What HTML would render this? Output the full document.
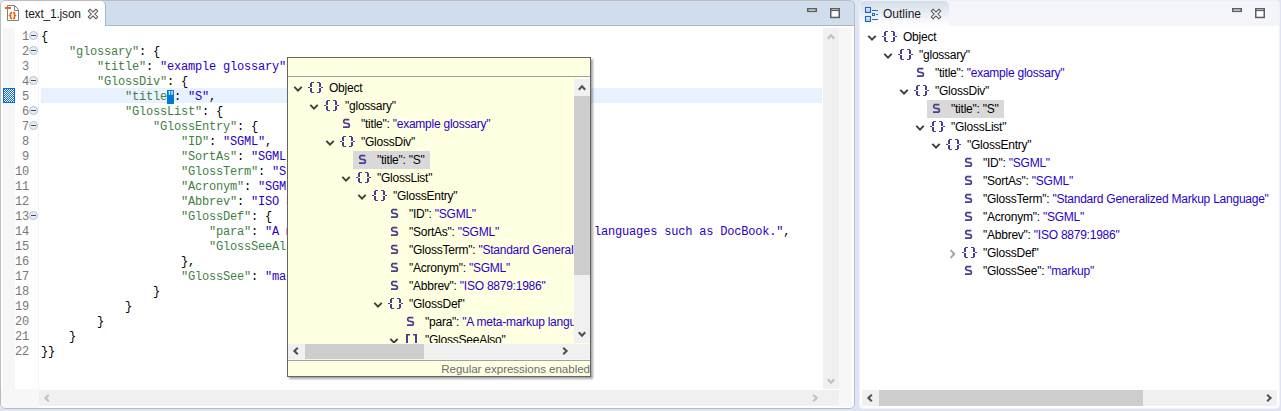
<!DOCTYPE html>
<html><head><meta charset="utf-8">
<style>
*{box-sizing:border-box}
html,body{margin:0;padding:0}
body{width:1281px;height:411px;overflow:hidden;position:relative;background:#DEE4F5;font-family:"Liberation Sans",sans-serif;font-size:12px;color:#000}
.a{position:absolute}
svg{position:absolute;overflow:visible}
#ed{position:absolute;left:0;top:0;width:855px;height:409px;background:#fff;border-radius:5px;overflow:hidden}
#edb{position:absolute;left:0;top:0;width:855px;height:409px;border:1px solid #BDBDBD;border-radius:5px}
#tabbar{position:absolute;left:1px;top:1px;width:853px;height:25px;background:#D0DDED;border-bottom:1px solid #A7B7CD}
#tab{position:absolute;left:1px;top:1px;width:105px;height:25px;background:#fff;border-right:1px solid #A3B3CB;border-top-right-radius:5px}
.tt{position:absolute;font-size:12px;color:#1a1a1a;white-space:nowrap;line-height:14px}
.num{position:absolute;left:0;width:29px;text-align:right;font-family:"Liberation Mono",monospace;font-size:12px;line-height:15px;height:15px;color:#787878;letter-spacing:-0.2px;padding-top:2px}
.fold{position:absolute;left:29px;width:9px;height:9px;border-radius:50%;background:#E8EEF6;border:1px solid #B4C0D0}
.fold:after{content:"";position:absolute;left:1.2px;top:3px;width:4.6px;height:1.3px;background:#3E4A5C}
.ln{position:absolute;left:41px;white-space:pre;font-family:"Liberation Mono",monospace;font-size:12px;line-height:15px;height:15px;letter-spacing:-0.2px;color:#000;padding-top:2px}
.k{color:#437F44}
.v{color:#2A00C4}
.sel{background:#0078D7;color:#fff}
.ic{position:absolute}
.tl{position:absolute;height:18px;line-height:18px;white-space:pre;font-size:12px;letter-spacing:-0.24px;color:#000}
.tv{color:#2A00C8}
.tsel{position:absolute;height:18px;background:#D9D9D9}
#ptree .tsel{background:#D8D8C6}
#ol{position:absolute;left:859px;top:0;width:421px;height:409px;background:#fff;border-radius:5px;overflow:hidden}
#olb{position:absolute;left:859px;top:0;width:421px;height:409px;border:1px solid #EEF1F8;border-radius:5px}
#pop{position:absolute;left:287px;top:57px;width:304px;height:320px;background:#FFFFE1;box-shadow:2px 2px 2px rgba(0,0,0,0.35);overflow:hidden}
#popb{position:absolute;left:287px;top:57px;width:304px;height:320px;border:1px solid #646464}
#ptree{position:absolute;left:1px;top:20px;width:286px;height:266px;overflow:hidden}
#pstat{position:absolute;right:1px;top:306px;font-size:11.6px;color:#6D6D6D;line-height:14px;letter-spacing:-0.05px;white-space:nowrap}
</style></head><body>
<div id="ed">
  <div id="tabbar"></div>
  <div id="tab"></div>
  <svg style="left:4px;top:4px" width="16" height="18" viewBox="0 0 16 18">
    <path d="M3.5 1.5 H10.5 L14.5 5.5 V16.5 H3.5 Z" fill="#fff" stroke="#808080" stroke-width="1"/>
    <path d="M10.5 1.5 V6.5 H14.5" fill="none" stroke="#808080" stroke-width="1"/>
    <rect x="1" y="3" width="6" height="2" fill="#E8650E"/>
    <path fill="none" stroke="#E8650E" stroke-width="1.6" d="M8.2 8.6 H7.3 Q6.6 8.6 6.6 9.3 V10.7 L5.7 11.4 L6.6 12.1 V13.8 Q6.6 14.5 7.3 14.5 H8.2 M9 8.6 H9.8 Q10.5 8.6 10.5 9.3 V10.7 L11.4 11.4 L10.5 12.1 V13.8 Q10.5 14.5 9.8 14.5 H9"/>
  </svg>
  <div class="tt" style="left:25px;top:7px;letter-spacing:-0.2px">text_1.json</div>
  <svg style="left:88px;top:9px" width="10" height="10" viewBox="0 0 10 10"><path d="M2.1 2.1 L7.9 7.9 M7.9 2.1 L2.1 7.9" stroke="#505050" stroke-width="3.6" stroke-linecap="square"/><path d="M2.1 2.1 L7.9 7.9 M7.9 2.1 L2.1 7.9" stroke="#fff" stroke-width="1.7" stroke-linecap="square"/></svg>
  <svg style="left:807px;top:8px" width="10" height="5" viewBox="0 0 10 5"><rect x="0.75" y="0.75" width="8.5" height="2.6" fill="#fff" stroke="#5E5E5E" stroke-width="1.5"/></svg>
  <svg style="left:830px;top:8px" width="10" height="11" viewBox="0 0 10 11"><rect x="0.75" y="0.75" width="8.5" height="8.7" fill="#fff" stroke="#5E5E5E" stroke-width="1.5"/><rect x="1" y="2" width="8" height="1.1" fill="#5E5E5E"/></svg>
  <div class="a" style="left:3px;top:28px;width:12px;height:361px;background:#F6F6F6"></div>
  <div class="a" style="left:1px;top:389px;width:38px;height:19px;background:#F7F7F7"></div>
  <div class="a" style="left:38px;top:28px;width:1px;height:361px;background:#F4F4F4"></div>
  <div class="a" style="left:839px;top:28px;width:13px;height:379px;background:#F7F7F7"></div>
  <div class="a" style="left:41px;top:88px;width:781px;height:15px;background:#E8F2FE"></div>
  <svg style="left:3px;top:88px" width="12" height="15" viewBox="0 0 12 15"><defs><pattern id="ck" width="2" height="2" patternUnits="userSpaceOnUse"><rect width="2" height="2" fill="#fff"/><rect width="1" height="1" fill="#0A6BD8"/><rect x="1" y="1" width="1" height="1" fill="#0A6BD8"/></pattern></defs><rect width="12" height="15" fill="url(#ck)"/><rect x="0.5" y="0.5" width="11" height="14" fill="none" stroke="#0A6BD8" stroke-width="1"/></svg>
  <div class="num" style="top:28px">1</div>
<div class="fold" style="top:31px"></div>
<div class="num" style="top:43px">2</div>
<div class="fold" style="top:46px"></div>
<div class="num" style="top:58px">3</div>
<div class="num" style="top:73px">4</div>
<div class="fold" style="top:76px"></div>
<div class="num" style="top:88px">5</div>
<div class="num" style="top:103px">6</div>
<div class="fold" style="top:106px"></div>
<div class="num" style="top:118px">7</div>
<div class="fold" style="top:121px"></div>
<div class="num" style="top:133px">8</div>
<div class="num" style="top:148px">9</div>
<div class="num" style="top:163px">10</div>
<div class="num" style="top:178px">11</div>
<div class="num" style="top:193px">12</div>
<div class="num" style="top:208px">13</div>
<div class="fold" style="top:211px"></div>
<div class="num" style="top:223px">14</div>
<div class="num" style="top:238px">15</div>
<div class="num" style="top:253px">16</div>
<div class="num" style="top:268px">17</div>
<div class="num" style="top:283px">18</div>
<div class="num" style="top:298px">19</div>
<div class="num" style="top:313px">20</div>
<div class="num" style="top:328px">21</div>
<div class="num" style="top:343px">22</div>
  <div class="ln" style="top:28px">{</div>
<div class="ln" style="top:43px">    <span class="k">&quot;glossary&quot;</span>: {</div>
<div class="ln" style="top:58px">        <span class="k">&quot;title&quot;</span>: <span class="v">&quot;example glossary&quot;</span>,</div>
<div class="ln" style="top:73px">        <span class="k">&quot;GlossDiv&quot;</span>: {</div>
<div class="ln" style="top:88px">            <span class="k">&quot;title</span><span class="sel">&quot;</span>: <span class="v">&quot;S&quot;</span>,</div>
<div class="ln" style="top:103px">            <span class="k">&quot;GlossList&quot;</span>: {</div>
<div class="ln" style="top:118px">                <span class="k">&quot;GlossEntry&quot;</span>: {</div>
<div class="ln" style="top:133px">                    <span class="k">&quot;ID&quot;</span>: <span class="v">&quot;SGML&quot;</span>,</div>
<div class="ln" style="top:148px">                    <span class="k">&quot;SortAs&quot;</span>: <span class="v">&quot;SGML&quot;</span>,</div>
<div class="ln" style="top:163px">                    <span class="k">&quot;GlossTerm&quot;</span>: <span class="v">&quot;Standard Generalized Markup Language&quot;</span>,</div>
<div class="ln" style="top:178px">                    <span class="k">&quot;Acronym&quot;</span>: <span class="v">&quot;SGML&quot;</span>,</div>
<div class="ln" style="top:193px">                    <span class="k">&quot;Abbrev&quot;</span>: <span class="v">&quot;ISO 8879:1986&quot;</span>,</div>
<div class="ln" style="top:208px">                    <span class="k">&quot;GlossDef&quot;</span>: {</div>
<div class="ln" style="top:223px">                        <span class="k">&quot;para&quot;</span>: <span class="v">&quot;A meta-markup language, used to create markup languages such as DocBook.&quot;</span>,</div>
<div class="ln" style="top:238px">                        <span class="k">&quot;GlossSeeAlso&quot;</span>: [<span class="v">&quot;GML&quot;</span>, <span class="v">&quot;XML&quot;</span>]</div>
<div class="ln" style="top:253px">                    },</div>
<div class="ln" style="top:268px">                    <span class="k">&quot;GlossSee&quot;</span>: <span class="v">&quot;markup&quot;</span></div>
<div class="ln" style="top:283px">                }</div>
<div class="ln" style="top:298px">            }</div>
<div class="ln" style="top:313px">        }</div>
<div class="ln" style="top:328px">    }</div>
<div class="ln" style="top:343px">}}</div>
  <div class="a" style="left:823px;top:28px;width:16px;height:361px;background:#F0F0F0"></div>
  <svg style="left:827px;top:34px" width="8" height="6" viewBox="0 0 8 6"><path d="M0.8 4.8 L4 1.4 L7.2 4.8" fill="none" stroke="#C0C0C0" stroke-width="2.1"/></svg>
  <svg style="left:827px;top:378px" width="8" height="6" viewBox="0 0 8 6"><path d="M0.8 1.2 L4 4.6 L7.2 1.2" fill="none" stroke="#C0C0C0" stroke-width="2.1"/></svg>
  <div class="a" style="left:39px;top:390px;width:800px;height:16px;background:#F0F0F0"></div>
  <svg style="left:44px;top:394px" width="6" height="8" viewBox="0 0 6 8"><path d="M4.8 0.8 L1.4 4 L4.8 7.2" fill="none" stroke="#C0C0C0" stroke-width="2.1"/></svg>
  <svg style="left:812px;top:394px" width="6" height="8" viewBox="0 0 6 8"><path d="M1.2 0.8 L4.6 4 L1.2 7.2" fill="none" stroke="#C0C0C0" stroke-width="2.1"/></svg>
</div>
<div id="edb"></div>
<div id="ol"><div class="a" style="left:-859px;top:0;width:1281px;height:411px">
  <div class="a" style="left:860px;top:1px;width:419px;height:25px;background:#F3F5FA"></div>
  <div class="a" style="left:860px;top:1px;width:89px;height:25px;background:linear-gradient(#D3DDE9,#FFFFFF);border-top-right-radius:5px"></div>
  <svg style="left:864px;top:6px" width="16" height="17" viewBox="0 0 16 17">
    <defs><linearGradient id="og" x1="0" y1="0" x2="0" y2="1"><stop offset="0" stop-color="#F4F9FF"/><stop offset="1" stop-color="#9CC4F0"/></linearGradient></defs>
    <rect x="1.5" y="1.5" width="5" height="5" fill="url(#og)" stroke="#2366BA" stroke-width="1.1"/>
    <rect x="1.5" y="10.5" width="5" height="5" fill="url(#og)" stroke="#2366BA" stroke-width="1.1"/>
    <rect x="8" y="4" width="6" height="1" fill="#2E6FBF"/>
    <rect x="8" y="13" width="6" height="1" fill="#2E6FBF"/>
    <rect x="8.5" y="7.5" width="2" height="2" fill="#fff" stroke="#2366BA" stroke-width="1"/>
    <rect x="12" y="8" width="2" height="1" fill="#2E6FBF"/>
  </svg>
  <div class="tt" style="left:883px;top:7px">Outline</div>
  <svg style="left:931px;top:9px" width="10" height="10" viewBox="0 0 10 10"><path d="M2.1 2.1 L7.9 7.9 M7.9 2.1 L2.1 7.9" stroke="#505050" stroke-width="3.6" stroke-linecap="square"/><path d="M2.1 2.1 L7.9 7.9 M7.9 2.1 L2.1 7.9" stroke="#fff" stroke-width="1.7" stroke-linecap="square"/></svg>
  <svg style="left:1232px;top:8px" width="10" height="5" viewBox="0 0 10 5"><rect x="0.75" y="0.75" width="8.5" height="2.6" fill="#fff" stroke="#5E5E5E" stroke-width="1.5"/></svg>
  <svg style="left:1255px;top:8px" width="10" height="11" viewBox="0 0 10 11"><rect x="0.75" y="0.75" width="8.5" height="8.7" fill="#fff" stroke="#5E5E5E" stroke-width="1.5"/><rect x="1" y="2" width="8" height="1.1" fill="#5E5E5E"/></svg>
  <svg class="chev" style="left:867px;top:34px" width="10" height="8" viewBox="0 0 10 8"><path d="M1.3 1.8 L5 5.6 L8.7 1.8" fill="none" stroke="#3c3c3c" stroke-width="1.9"/></svg>
<svg class="ic" style="left:882px;top:30px" width="16" height="13" viewBox="0 0 16 13"><path fill="#4E3C8E" d="M3 1h3v1H3zM2 2h2v4H2zM0 6h2v1H0zM2 7h2v4H2zM3 11h3v1H3zM9 1h3v1H9zM11 2h2v4h-2zM13 6h2v1h-2zM11 7h2v4h-2zM9 11h3v1H9z"/></svg>
<div class="tl" style="left:903px;top:28px">Object</div>
<svg class="chev" style="left:883px;top:52px" width="10" height="8" viewBox="0 0 10 8"><path d="M1.3 1.8 L5 5.6 L8.7 1.8" fill="none" stroke="#3c3c3c" stroke-width="1.9"/></svg>
<svg class="ic" style="left:898px;top:48px" width="16" height="13" viewBox="0 0 16 13"><path fill="#4E3C8E" d="M3 1h3v1H3zM2 2h2v4H2zM0 6h2v1H0zM2 7h2v4H2zM3 11h3v1H3zM9 1h3v1H9zM11 2h2v4h-2zM13 6h2v1h-2zM11 7h2v4h-2zM9 11h3v1H9z"/></svg>
<div class="tl" style="left:919px;top:46px">&quot;glossary&quot;</div>
<svg class="ic" style="left:916px;top:67px" width="9" height="11" viewBox="0 0 9 11"><path d="M7.3 1.7 H2.6 L1.8 2.5 V4.2 L2.6 5 L6.6 5.8 L7.3 6.6 V8.5 L6.6 9.2 H1" fill="none" stroke="#4E3C8E" stroke-width="1.7"/></svg>
<div class="tl" style="left:935px;top:64px">&quot;title&quot;: <span class="tv">&quot;example glossary&quot;</span></div>
<svg class="chev" style="left:899px;top:88px" width="10" height="8" viewBox="0 0 10 8"><path d="M1.3 1.8 L5 5.6 L8.7 1.8" fill="none" stroke="#3c3c3c" stroke-width="1.9"/></svg>
<svg class="ic" style="left:914px;top:84px" width="16" height="13" viewBox="0 0 16 13"><path fill="#4E3C8E" d="M3 1h3v1H3zM2 2h2v4H2zM0 6h2v1H0zM2 7h2v4H2zM3 11h3v1H3zM9 1h3v1H9zM11 2h2v4h-2zM13 6h2v1h-2zM11 7h2v4h-2zM9 11h3v1H9z"/></svg>
<div class="tl" style="left:935px;top:82px">&quot;GlossDiv&quot;</div>
<div class="tsel" style="left:927px;top:100px;width:77px"></div>
<svg class="ic" style="left:932px;top:103px" width="9" height="11" viewBox="0 0 9 11"><path d="M7.3 1.7 H2.6 L1.8 2.5 V4.2 L2.6 5 L6.6 5.8 L7.3 6.6 V8.5 L6.6 9.2 H1" fill="none" stroke="#4E3C8E" stroke-width="1.7"/></svg>
<div class="tl" style="left:951px;top:100px">&quot;title&quot;: &quot;S&quot;</div>
<svg class="chev" style="left:915px;top:124px" width="10" height="8" viewBox="0 0 10 8"><path d="M1.3 1.8 L5 5.6 L8.7 1.8" fill="none" stroke="#3c3c3c" stroke-width="1.9"/></svg>
<svg class="ic" style="left:930px;top:120px" width="16" height="13" viewBox="0 0 16 13"><path fill="#4E3C8E" d="M3 1h3v1H3zM2 2h2v4H2zM0 6h2v1H0zM2 7h2v4H2zM3 11h3v1H3zM9 1h3v1H9zM11 2h2v4h-2zM13 6h2v1h-2zM11 7h2v4h-2zM9 11h3v1H9z"/></svg>
<div class="tl" style="left:951px;top:118px">&quot;GlossList&quot;</div>
<svg class="chev" style="left:931px;top:142px" width="10" height="8" viewBox="0 0 10 8"><path d="M1.3 1.8 L5 5.6 L8.7 1.8" fill="none" stroke="#3c3c3c" stroke-width="1.9"/></svg>
<svg class="ic" style="left:946px;top:138px" width="16" height="13" viewBox="0 0 16 13"><path fill="#4E3C8E" d="M3 1h3v1H3zM2 2h2v4H2zM0 6h2v1H0zM2 7h2v4H2zM3 11h3v1H3zM9 1h3v1H9zM11 2h2v4h-2zM13 6h2v1h-2zM11 7h2v4h-2zM9 11h3v1H9z"/></svg>
<div class="tl" style="left:967px;top:136px">&quot;GlossEntry&quot;</div>
<svg class="ic" style="left:964px;top:157px" width="9" height="11" viewBox="0 0 9 11"><path d="M7.3 1.7 H2.6 L1.8 2.5 V4.2 L2.6 5 L6.6 5.8 L7.3 6.6 V8.5 L6.6 9.2 H1" fill="none" stroke="#4E3C8E" stroke-width="1.7"/></svg>
<div class="tl" style="left:983px;top:154px">&quot;ID&quot;: <span class="tv">&quot;SGML&quot;</span></div>
<svg class="ic" style="left:964px;top:175px" width="9" height="11" viewBox="0 0 9 11"><path d="M7.3 1.7 H2.6 L1.8 2.5 V4.2 L2.6 5 L6.6 5.8 L7.3 6.6 V8.5 L6.6 9.2 H1" fill="none" stroke="#4E3C8E" stroke-width="1.7"/></svg>
<div class="tl" style="left:983px;top:172px">&quot;SortAs&quot;: <span class="tv">&quot;SGML&quot;</span></div>
<svg class="ic" style="left:964px;top:193px" width="9" height="11" viewBox="0 0 9 11"><path d="M7.3 1.7 H2.6 L1.8 2.5 V4.2 L2.6 5 L6.6 5.8 L7.3 6.6 V8.5 L6.6 9.2 H1" fill="none" stroke="#4E3C8E" stroke-width="1.7"/></svg>
<div class="tl" style="left:983px;top:190px">&quot;GlossTerm&quot;: <span class="tv">&quot;Standard Generalized Markup Language&quot;</span></div>
<svg class="ic" style="left:964px;top:211px" width="9" height="11" viewBox="0 0 9 11"><path d="M7.3 1.7 H2.6 L1.8 2.5 V4.2 L2.6 5 L6.6 5.8 L7.3 6.6 V8.5 L6.6 9.2 H1" fill="none" stroke="#4E3C8E" stroke-width="1.7"/></svg>
<div class="tl" style="left:983px;top:208px">&quot;Acronym&quot;: <span class="tv">&quot;SGML&quot;</span></div>
<svg class="ic" style="left:964px;top:229px" width="9" height="11" viewBox="0 0 9 11"><path d="M7.3 1.7 H2.6 L1.8 2.5 V4.2 L2.6 5 L6.6 5.8 L7.3 6.6 V8.5 L6.6 9.2 H1" fill="none" stroke="#4E3C8E" stroke-width="1.7"/></svg>
<div class="tl" style="left:983px;top:226px">&quot;Abbrev&quot;: <span class="tv">&quot;ISO 8879:1986&quot;</span></div>
<svg class="chev" style="left:949px;top:249px" width="7" height="10" viewBox="0 0 7 10"><path d="M1.6 1.2 L5.3 5 L1.6 8.8" fill="none" stroke="#A2A2A2" stroke-width="1.9"/></svg>
<svg class="ic" style="left:962px;top:246px" width="16" height="13" viewBox="0 0 16 13"><path fill="#4E3C8E" d="M3 1h3v1H3zM2 2h2v4H2zM0 6h2v1H0zM2 7h2v4H2zM3 11h3v1H3zM9 1h3v1H9zM11 2h2v4h-2zM13 6h2v1h-2zM11 7h2v4h-2zM9 11h3v1H9z"/></svg>
<div class="tl" style="left:983px;top:244px">&quot;GlossDef&quot;</div>
<svg class="ic" style="left:964px;top:265px" width="9" height="11" viewBox="0 0 9 11"><path d="M7.3 1.7 H2.6 L1.8 2.5 V4.2 L2.6 5 L6.6 5.8 L7.3 6.6 V8.5 L6.6 9.2 H1" fill="none" stroke="#4E3C8E" stroke-width="1.7"/></svg>
<div class="tl" style="left:983px;top:262px">&quot;GlossSee&quot;: <span class="tv">&quot;markup&quot;</span></div>
  <div class="a" style="left:862px;top:390px;width:415px;height:16px;background:#F0F0F0"></div>
  <div class="a" style="left:879px;top:390px;width:264px;height:16px;background:#CDCDCD"></div>
  <svg style="left:867px;top:394px" width="6" height="8" viewBox="0 0 6 8"><path d="M4.8 0.8 L1.4 4 L4.8 7.2" fill="none" stroke="#505050" stroke-width="2.1"/></svg>
  <svg style="left:1266px;top:394px" width="6" height="8" viewBox="0 0 6 8"><path d="M1.2 0.8 L4.6 4 L1.2 7.2" fill="none" stroke="#505050" stroke-width="2.1"/></svg>
</div></div>
<div id="olb"></div>
<div id="pop"><div class="a" style="left:-287px;top:-57px;width:1281px;height:411px">
  <div class="a" style="left:288px;top:76px;width:302px;height:1px;background:#A0A0A0"></div>
  <div class="a" style="left:288px;top:344px;width:302px;height:15px;background:#F0F0F0"></div>
  <div class="a" style="left:288px;top:359px;width:302px;height:1px;background:#F6F6F6"></div>
  <div class="a" style="left:288px;top:360px;width:302px;height:1px;background:#A0A0A0"></div>
  <div class="a" style="left:574px;top:79px;width:16px;height:264px;background:#F0F0F0"></div>
  <div class="a" style="left:574px;top:96px;width:16px;height:179px;background:#CDCDCD"></div>
  <svg style="left:578px;top:85px" width="8" height="6" viewBox="0 0 8 6"><path d="M0.8 4.8 L4 1.4 L7.2 4.8" fill="none" stroke="#505050" stroke-width="2.1"/></svg>
  <svg style="left:578px;top:331px" width="8" height="6" viewBox="0 0 8 6"><path d="M0.8 1.2 L4 4.6 L7.2 1.2" fill="none" stroke="#505050" stroke-width="2.1"/></svg>
  <div class="a" style="left:305px;top:344px;width:119px;height:15px;background:#CDCDCD"></div>
  <svg style="left:293px;top:347px" width="6" height="8" viewBox="0 0 6 8"><path d="M4.8 0.8 L1.4 4 L4.8 7.2" fill="none" stroke="#505050" stroke-width="2.1"/></svg>
  <svg style="left:562px;top:347px" width="6" height="8" viewBox="0 0 6 8"><path d="M1.2 0.8 L4.6 4 L1.2 7.2" fill="none" stroke="#505050" stroke-width="2.1"/></svg>
  <div class="a" style="left:288px;top:77px;width:286px;height:266px;overflow:hidden"><div class="a" style="left:-288px;top:-77px;width:1281px;height:411px">
  <svg class="chev" style="left:293px;top:85px" width="10" height="8" viewBox="0 0 10 8"><path d="M1.3 1.8 L5 5.6 L8.7 1.8" fill="none" stroke="#3c3c3c" stroke-width="1.9"/></svg>
<svg class="ic" style="left:308px;top:81px" width="16" height="13" viewBox="0 0 16 13"><path fill="#4E3C8E" d="M3 1h3v1H3zM2 2h2v4H2zM0 6h2v1H0zM2 7h2v4H2zM3 11h3v1H3zM9 1h3v1H9zM11 2h2v4h-2zM13 6h2v1h-2zM11 7h2v4h-2zM9 11h3v1H9z"/></svg>
<div class="tl" style="left:329px;top:79px">Object</div>
<svg class="chev" style="left:309px;top:103px" width="10" height="8" viewBox="0 0 10 8"><path d="M1.3 1.8 L5 5.6 L8.7 1.8" fill="none" stroke="#3c3c3c" stroke-width="1.9"/></svg>
<svg class="ic" style="left:324px;top:99px" width="16" height="13" viewBox="0 0 16 13"><path fill="#4E3C8E" d="M3 1h3v1H3zM2 2h2v4H2zM0 6h2v1H0zM2 7h2v4H2zM3 11h3v1H3zM9 1h3v1H9zM11 2h2v4h-2zM13 6h2v1h-2zM11 7h2v4h-2zM9 11h3v1H9z"/></svg>
<div class="tl" style="left:345px;top:97px">&quot;glossary&quot;</div>
<svg class="ic" style="left:342px;top:118px" width="9" height="11" viewBox="0 0 9 11"><path d="M7.3 1.7 H2.6 L1.8 2.5 V4.2 L2.6 5 L6.6 5.8 L7.3 6.6 V8.5 L6.6 9.2 H1" fill="none" stroke="#4E3C8E" stroke-width="1.7"/></svg>
<div class="tl" style="left:361px;top:115px">&quot;title&quot;: <span class="tv">&quot;example glossary&quot;</span></div>
<svg class="chev" style="left:325px;top:139px" width="10" height="8" viewBox="0 0 10 8"><path d="M1.3 1.8 L5 5.6 L8.7 1.8" fill="none" stroke="#3c3c3c" stroke-width="1.9"/></svg>
<svg class="ic" style="left:340px;top:135px" width="16" height="13" viewBox="0 0 16 13"><path fill="#4E3C8E" d="M3 1h3v1H3zM2 2h2v4H2zM0 6h2v1H0zM2 7h2v4H2zM3 11h3v1H3zM9 1h3v1H9zM11 2h2v4h-2zM13 6h2v1h-2zM11 7h2v4h-2zM9 11h3v1H9z"/></svg>
<div class="tl" style="left:361px;top:133px">&quot;GlossDiv&quot;</div>
<div class="tsel" style="left:353px;top:151px;width:77px"></div>
<svg class="ic" style="left:358px;top:154px" width="9" height="11" viewBox="0 0 9 11"><path d="M7.3 1.7 H2.6 L1.8 2.5 V4.2 L2.6 5 L6.6 5.8 L7.3 6.6 V8.5 L6.6 9.2 H1" fill="none" stroke="#4E3C8E" stroke-width="1.7"/></svg>
<div class="tl" style="left:377px;top:151px">&quot;title&quot;: &quot;S&quot;</div>
<svg class="chev" style="left:341px;top:175px" width="10" height="8" viewBox="0 0 10 8"><path d="M1.3 1.8 L5 5.6 L8.7 1.8" fill="none" stroke="#3c3c3c" stroke-width="1.9"/></svg>
<svg class="ic" style="left:356px;top:171px" width="16" height="13" viewBox="0 0 16 13"><path fill="#4E3C8E" d="M3 1h3v1H3zM2 2h2v4H2zM0 6h2v1H0zM2 7h2v4H2zM3 11h3v1H3zM9 1h3v1H9zM11 2h2v4h-2zM13 6h2v1h-2zM11 7h2v4h-2zM9 11h3v1H9z"/></svg>
<div class="tl" style="left:377px;top:169px">&quot;GlossList&quot;</div>
<svg class="chev" style="left:357px;top:193px" width="10" height="8" viewBox="0 0 10 8"><path d="M1.3 1.8 L5 5.6 L8.7 1.8" fill="none" stroke="#3c3c3c" stroke-width="1.9"/></svg>
<svg class="ic" style="left:372px;top:189px" width="16" height="13" viewBox="0 0 16 13"><path fill="#4E3C8E" d="M3 1h3v1H3zM2 2h2v4H2zM0 6h2v1H0zM2 7h2v4H2zM3 11h3v1H3zM9 1h3v1H9zM11 2h2v4h-2zM13 6h2v1h-2zM11 7h2v4h-2zM9 11h3v1H9z"/></svg>
<div class="tl" style="left:393px;top:187px">&quot;GlossEntry&quot;</div>
<svg class="ic" style="left:390px;top:208px" width="9" height="11" viewBox="0 0 9 11"><path d="M7.3 1.7 H2.6 L1.8 2.5 V4.2 L2.6 5 L6.6 5.8 L7.3 6.6 V8.5 L6.6 9.2 H1" fill="none" stroke="#4E3C8E" stroke-width="1.7"/></svg>
<div class="tl" style="left:409px;top:205px">&quot;ID&quot;: <span class="tv">&quot;SGML&quot;</span></div>
<svg class="ic" style="left:390px;top:226px" width="9" height="11" viewBox="0 0 9 11"><path d="M7.3 1.7 H2.6 L1.8 2.5 V4.2 L2.6 5 L6.6 5.8 L7.3 6.6 V8.5 L6.6 9.2 H1" fill="none" stroke="#4E3C8E" stroke-width="1.7"/></svg>
<div class="tl" style="left:409px;top:223px">&quot;SortAs&quot;: <span class="tv">&quot;SGML&quot;</span></div>
<svg class="ic" style="left:390px;top:244px" width="9" height="11" viewBox="0 0 9 11"><path d="M7.3 1.7 H2.6 L1.8 2.5 V4.2 L2.6 5 L6.6 5.8 L7.3 6.6 V8.5 L6.6 9.2 H1" fill="none" stroke="#4E3C8E" stroke-width="1.7"/></svg>
<div class="tl" style="left:409px;top:241px">&quot;GlossTerm&quot;: <span class="tv">&quot;Standard Generalized Markup Language&quot;</span></div>
<svg class="ic" style="left:390px;top:262px" width="9" height="11" viewBox="0 0 9 11"><path d="M7.3 1.7 H2.6 L1.8 2.5 V4.2 L2.6 5 L6.6 5.8 L7.3 6.6 V8.5 L6.6 9.2 H1" fill="none" stroke="#4E3C8E" stroke-width="1.7"/></svg>
<div class="tl" style="left:409px;top:259px">&quot;Acronym&quot;: <span class="tv">&quot;SGML&quot;</span></div>
<svg class="ic" style="left:390px;top:280px" width="9" height="11" viewBox="0 0 9 11"><path d="M7.3 1.7 H2.6 L1.8 2.5 V4.2 L2.6 5 L6.6 5.8 L7.3 6.6 V8.5 L6.6 9.2 H1" fill="none" stroke="#4E3C8E" stroke-width="1.7"/></svg>
<div class="tl" style="left:409px;top:277px">&quot;Abbrev&quot;: <span class="tv">&quot;ISO 8879:1986&quot;</span></div>
<svg class="chev" style="left:373px;top:301px" width="10" height="8" viewBox="0 0 10 8"><path d="M1.3 1.8 L5 5.6 L8.7 1.8" fill="none" stroke="#3c3c3c" stroke-width="1.9"/></svg>
<svg class="ic" style="left:388px;top:297px" width="16" height="13" viewBox="0 0 16 13"><path fill="#4E3C8E" d="M3 1h3v1H3zM2 2h2v4H2zM0 6h2v1H0zM2 7h2v4H2zM3 11h3v1H3zM9 1h3v1H9zM11 2h2v4h-2zM13 6h2v1h-2zM11 7h2v4h-2zM9 11h3v1H9z"/></svg>
<div class="tl" style="left:409px;top:295px">&quot;GlossDef&quot;</div>
<svg class="ic" style="left:406px;top:316px" width="9" height="11" viewBox="0 0 9 11"><path d="M7.3 1.7 H2.6 L1.8 2.5 V4.2 L2.6 5 L6.6 5.8 L7.3 6.6 V8.5 L6.6 9.2 H1" fill="none" stroke="#4E3C8E" stroke-width="1.7"/></svg>
<div class="tl" style="left:425px;top:313px">&quot;para&quot;: <span class="tv">&quot;A meta-markup language, used to create markup languages such as DocBook.&quot;</span></div>
<svg class="chev" style="left:389px;top:337px" width="10" height="8" viewBox="0 0 10 8"><path d="M1.3 1.8 L5 5.6 L8.7 1.8" fill="none" stroke="#3c3c3c" stroke-width="1.9"/></svg>
<svg class="ic" style="left:404px;top:333px" width="16" height="13" viewBox="0 0 16 13"><path fill="#4E3C8E" d="M2 1h4v1.4H4v8.2H6V12H2zM9 1h4v11H9v-1.4h2V2.4H9z"/></svg>
<div class="tl" style="left:425px;top:331px">&quot;GlossSeeAlso&quot;</div>
  </div></div>
  <div id="pstat" style="left:auto;right:691px;top:362px">Regular expressions enabled</div>
</div></div>
<div id="popb"></div>
</body></html>
